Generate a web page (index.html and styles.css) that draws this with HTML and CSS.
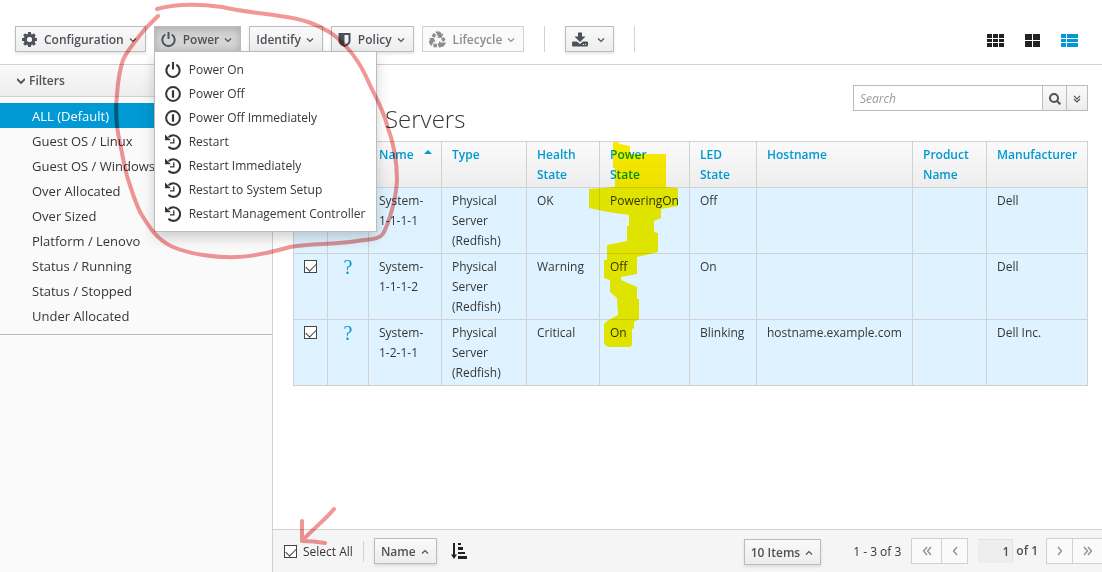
FILE: index.html
```
<!DOCTYPE html>
<html lang="en">
<head>
<meta charset="utf-8">
<title>Servers</title>
<link rel="stylesheet" href="styles.css">
</head>
<body>
<svg class="defs" aria-hidden="true">
  <symbol id="down" viewBox="0 0 8 8"><path d="M1 2.500l3 3 3-3" fill="none" stroke="currentColor" stroke-width="1.200"/></symbol>
  <symbol id="up" viewBox="0 0 8 8"><path d="M1 5.500l3-3 3 3" fill="none" stroke="currentColor" stroke-width="1.200"/></symbol>
  <symbol id="power" viewBox="0 0 16 16"><path d="M4.600 2.700a6.600 6.600 0 1 0 6.800 0M8 0v7.500" fill="none" stroke="currentColor" stroke-width="2.100"/></symbol>
  <symbol id="off" viewBox="0 0 16 16"><circle cx="8" cy="8" r="6.900" fill="none" stroke="currentColor" stroke-width="2"/><path d="M8 4.300v7.400" stroke="currentColor" stroke-width="2.200"/></symbol>
  <symbol id="history" viewBox="0 0 16 16"><path d="M3.600 3.200A6.800 6.800 0 1 1 3.400 12.800" fill="none" stroke="currentColor" stroke-width="2.100"/><path d="M0 .5v5.700h5.900z" fill="currentColor"/><path d="M8.800 4.500v4.300H5" fill="none" stroke="currentColor" stroke-width="1.300"/></symbol>
</svg>
<div class="page">
  <header class="toolbar">
    <button class="btn"><svg class="icon" viewBox="0 128 1536 1536"><path fill="currentColor" d="M1024 896q0 106-75 181t-181 75-181-75-75-181 75-181 181-75 181 75 75 181zm512-109v222q0 12-8 23t-20 13l-185 28q-19 54-39 91 35 50 107 138 10 12 10 25t-9 23q-27 37-99 108t-94 71q-12 0-26-9l-138-108q-44 23-91 38-16 136-29 186-7 28-36 28h-222q-14 0-24.500-8.500t-11.500-21.500l-28-184q-49-16-90-37l-141 107q-10 9-25 9-14 0-25-11-126-114-165-168-7-10-7-23 0-12 8-23 15-21 51-66.500t54-70.500q-27-50-41-99l-183-27q-13-2-21-12.500t-8-23.500v-222q0-12 8-23t19-13l186-28q14-46 39-92-40-57-107-138-10-12-10-24 0-10 9-23 26-36 98.500-107.500t94.500-71.500q13 0 26 10l138 107q44-23 91-38 16-136 29-186 7-28 36-28h222q14 0 24.500 8.500t11.500 21.500l28 184q49 16 90 37l142-107q9-9 24-9 13 0 25 10 129 119 165 170 7 8 7 22 0 12-8 23-15 21-51 66.500t-54 70.500q26 50 41 98l183 28q13 2 21 12.500t8 23.500z" fill-rule="evenodd"/><circle cx="768" cy="896" r="256" fill="#f4f4f4"/></svg><span class="label">Configuration</span><svg class="caret"><use href="#down"/></svg></button>
    <div class="dropdown">
      <button class="btn open" aria-expanded="true"><svg class="icon"><use href="#power"/></svg><span class="label">Power</span><svg class="caret"><use href="#down"/></svg></button>
      <div class="menu" role="menu">
        <button class="item" role="menuitem"><svg><use href="#power"/></svg>Power On</button>
        <button class="item" role="menuitem"><svg><use href="#off"/></svg>Power Off</button>
        <button class="item" role="menuitem"><svg><use href="#off"/></svg>Power Off Immediately</button>
        <button class="item" role="menuitem"><svg><use href="#history"/></svg>Restart</button>
        <button class="item" role="menuitem"><svg><use href="#history"/></svg>Restart Immediately</button>
        <button class="item" role="menuitem"><svg><use href="#history"/></svg>Restart to System Setup</button>
        <button class="item" role="menuitem"><svg><use href="#history"/></svg>Restart Management Controller</button>
      </div>
    </div>
    <button class="btn">Identify<svg class="caret"><use href="#down"/></svg></button>
    <button class="btn"><svg class="icon small" viewBox="0 0 12 14"><path fill="currentColor" fill-rule="evenodd" d="M0 0h12v8c0 3-3 5-6 6-3-1-6-3-6-6zM6 2v10c2-.8 4-2.200 4-4V2z"/></svg><span class="label">Policy</span><svg class="caret"><use href="#down"/></svg></button>
    <button class="btn" disabled><svg class="icon wide" viewBox="0 0 16 16"><g id="leg"><path d="M3.900 5.600L5.500 2.700" fill="none" stroke="currentColor" stroke-width="3.200"/><path fill="currentColor" d="M6 .5h3.800q.8 0 1.300.8l1.100 1.800 1.500-.8-2 4.200-4.600-.3 1.500-.9z"/></g><use href="#leg" transform="rotate(120 8 8.600)"/><use href="#leg" transform="rotate(240 8 8.600)"/></svg><span class="label">Lifecycle</span><svg class="caret"><use href="#down"/></svg></button>
    <span class="divider"></span>
    <button class="btn download" aria-label="Download"><svg class="icon" viewBox="0 0 16 14"><path fill="currentColor" d="M6 0h4v4h3.500L8 9.500 2.500 4H6z"/><path fill="currentColor" fill-rule="evenodd" d="M1 9h4l3 2.500L11 9h4q1 0 1 1v3q0 1-1 1H1q-1 0-1-1v-3q0-1 1-1zM11 11.500v1h1v-1zM13 11.500v1h1v-1z"/></svg><svg class="caret"><use href="#down"/></svg></button>
    <span class="divider"></span>
    <nav class="views">
      <button aria-label="Grid view"><svg viewBox="0 0 17 13"><path fill="currentColor" d="M0 0h5v4H0zM6 0h5v4H6zM12 0h5v4h-5zM0 5h5v3H0zM6 5h5v3H6zM12 5h5v3h-5zM0 9h5v4H0zM6 9h5v4H6zM12 9h5v4h-5z"/></svg></button>
      <button aria-label="Tile view"><svg viewBox="0 0 17 13"><path fill="currentColor" d="M1 0h7v6H1zM9 0h7v6H9zM1 7h7v6H1zM9 7h7v6H9z"/></svg></button>
      <button class="current" aria-label="List view"><svg viewBox="0 0 17 13"><path fill="currentColor" d="M0 0h5v4H0zM6 0h11v4H6zM0 5h5v3H0zM6 5h11v3H6zM0 9h5v4H0zM6 9h11v4H6z"/></svg></button>
    </nav>
  </header>
  <div class="body">
    <aside class="sidebar">
      <button class="filters"><svg viewBox="0 0 8 8"><path d="M0 2l4 4 4-4" fill="none" stroke="currentColor" stroke-width="1.800"/></svg>Filters</button>
      <nav class="list">
        <a class="active" href="#">ALL (Default)</a>
        <a href="#">Guest OS / Linux</a>
        <a href="#">Guest OS / Windows</a>
        <a href="#">Over Allocated</a>
        <a href="#">Over Sized</a>
        <a href="#">Platform / Lenovo</a>
        <a href="#">Status / Running</a>
        <a href="#">Status / Stopped</a>
        <a href="#">Under Allocated</a>
      </nav>
    </aside>
    <main class="main">
      <div class="content">
        <form class="search">
          <input type="text" placeholder="Search" aria-label="Search">
          <button type="button" aria-label="Run search"><svg viewBox="0 0 12 12"><circle cx="5" cy="5" r="4" fill="none" stroke="currentColor" stroke-width="2"/><path d="M8 8l3.300 3.300" stroke="currentColor" stroke-width="2"/></svg></button>
          <button type="button" class="more" aria-label="Advanced search"><svg viewBox="0 0 8 8"><path d="M1 .8l3 3 3-3M1 4l3 3 3-3" fill="none" stroke="currentColor" stroke-width="1.200"/></svg></button>
        </form>
        <h1>Servers</h1>
        <table>
          <colgroup><col class="c-check"><col class="c-icon"><col class="c-name"><col class="c-type"><col class="c-name"><col class="c-power"><col class="c-led"><col class="c-host"><col class="c-product"><col class="c-maker"></colgroup>
          <thead><tr><th></th><th></th><th class="sort-col"><a href="#">Name</a><span class="sorted"></span></th><th><a href="#">Type</a></th><th><a href="#">Health State</a></th><th><a href="#">Power State</a></th><th><a href="#">LED State</a></th><th><a href="#">Hostname</a></th><th><a href="#">Product Name</a></th><th><a href="#">Manufacturer</a></th></tr></thead>
          <tbody>
            <tr><td class="mid"><input type="checkbox" checked aria-label="System-1-1-1-1"></td><td class="mid unknown"></td><td>System-1-1-1-1</td><td>Physical Server (Redfish)</td><td>OK</td><td>PoweringOn</td><td>Off</td><td></td><td></td><td>Dell</td></tr>
            <tr><td class="mid"><input type="checkbox" checked aria-label="System-1-1-1-2"></td><td class="mid unknown">?</td><td>System-1-1-1-2</td><td>Physical Server (Redfish)</td><td>Warning</td><td>Off</td><td>On</td><td></td><td></td><td>Dell</td></tr>
            <tr><td class="mid"><input type="checkbox" checked aria-label="System-1-2-1-1"></td><td class="mid unknown">?</td><td>System-1-2-1-1</td><td>Physical Server (Redfish)</td><td>Critical</td><td>On</td><td>Blinking</td><td>hostname.example.com</td><td></td><td>Dell Inc.</td></tr>
          </tbody>
        </table>
      </div>
      <footer class="footer">
        <label class="all"><input type="checkbox" checked>Select All</label>
        <button class="btn">Name<svg class="caret"><use href="#up"/></svg></button>
        <button class="sort" aria-label="Sort ascending"><svg viewBox="0 0 16 16"><path d="M3 0v12" stroke="currentColor" stroke-width="2"/><path fill="currentColor" d="M0 11.500h6L3 16zM7 0h3v2H7zM7 4h5v3H7zM7 9h7v2H7zM7 13h9v3H7z"/></svg></button>
        <button class="btn items">10 Items<svg class="caret"><use href="#up"/></svg></button>
        <span class="range">1 - 3 of 3</span>
        <div class="pager">
          <button aria-label="First page"><svg viewBox="0 0 10 10"><path d="M5 1L1.500 5 5 9M9 1L5.500 5 9 9"/></svg></button>
          <button aria-label="Previous page"><svg viewBox="0 0 10 10"><path d="M7 1L3.500 5 7 9"/></svg></button>
        </div>
        <label class="pageno"><input type="text" value="1" aria-label="Page">of 1</label>
        <div class="pager last">
          <button aria-label="Next page"><svg viewBox="0 0 10 10"><path d="M3 1l3.500 4L3 9"/></svg></button>
          <button aria-label="Last page"><svg viewBox="0 0 10 10"><path d="M1 1l3.500 4L1 9M5 1l3.500 4L5 9"/></svg></button>
        </div>
      </footer>
    </main>
  </div>
  <svg class="marks" viewBox="0 0 1102 572" width="1102" height="572" aria-hidden="true">
    <path class="marker" d="M613 142h5l2 2 10 2v8h36v33l12 1v18l-17 3v9l-7 3v11l4 1v19l-21 5v17l-16 3v3l16 7v12h2v20l-5 3v6l-2 1v16l-2 2h-22l-4-3v-20l3-3 11-6-1-17-7-6v-12l-6-2v-18h3v-15l20-4v-15h2v-11l-21-3-19-4v-19l26-2v-19h-2z"/>
    <path class="pen" d="M157 9C175 4 200 4 222 7C245 12 260 13 280 16C304 19 316 24 331 33C350 47 361 64 369 83C376 98 383 109 387 125C393 141 397 161 397 180C396 200 389 222 384 232C380 241 366 239 357 241C330 245 315 243 290 247C275 251 260 256 237 257C215 258 190 254 173 247C157 240 149 227 140 212C134 199 131 189 127 176C124 164 122 153 120 143C117 130 115 112 117 95C118 78 120 69 123 60C127 50 138 38 145 29L158 16"/>
    <path class="pen" d="M334 509C326 519 312 530 302 541M302 521V541Q313 541 325 543"/>
  </svg>
</div>
</body>
</html>
```
FILE: styles.css
```
* { box-sizing: border-box; }
body {
  margin: 0;
  font: 12px/20px "Open Sans", "Liberation Sans", sans-serif;
  color: #363636;
  background: #fff;
}
button, input { font: inherit; color: inherit; margin: 0; }
button { cursor: pointer; }
a { text-decoration: none; color: inherit; }
.defs { position: absolute; width: 0; height: 0; }
.page { position: relative; display: flex; flex-direction: column; min-height: 100vh; overflow: hidden; }

.toolbar {
  display: flex;
  align-items: center;
  gap: 8px;
  padding: 26px 24px 12px 15px;
  border-bottom: 1px solid #d1d1d1;
}
.btn {
  display: flex;
  align-items: center;
  height: 26px;
  padding: 1px 8px 0 6px;
  border: 1px solid #bbb;
  background: linear-gradient(#fafafa, #ededed);
  box-shadow: 0 2px 3px rgba(3, 3, 3, .1);
  font-weight: 600;
  color: #4d5258;
  white-space: nowrap;
}
.btn:disabled { background: #fafafa; color: #8b8d8f; border-color: #d1d1d1; box-shadow: none; }
.btn.open { background: #d4d4d4; box-shadow: inset 0 2px 8px rgba(3, 3, 3, .2); }
.icon { width: 15px; height: 15px; }
.icon.small { width: 13px; height: 14px; }
.icon.wide { width: 17px; height: 17px; }
.label { margin-left: 7px; }
.caret { width: 8px; height: 8px; margin-left: 5px; }
.divider { width: 1px; height: 26px; margin: 0 12px; background: #d1d1d1; }
.download .icon { width: 16px; }
.download .caret { margin-left: 9px; }
.views { display: flex; gap: 20px; margin-left: auto; }
.views button { display: flex; padding: 2px 0 0; border: 0; background: none; color: #222; }
.views svg { width: 17px; height: 13px; }
.views .current { color: #0099d3; }

.dropdown { position: relative; }
.menu {
  position: absolute;
  z-index: 5;
  top: 100%;
  left: 0;
  margin-top: -1px;
  padding: 6px 0 5px;
  border: 1px solid #bbb;
  background: #fff;
  box-shadow: 0 6px 12px rgba(0, 0, 0, .18);
}
.item {
  display: flex;
  align-items: center;
  gap: 8px;
  width: 100%;
  height: 24px;
  padding: 0 11px 0 10px;
  border: 0;
  background: none;
  white-space: nowrap;
}
.item svg { width: 16px; height: 16px; }

.body { display: flex; flex: 1; }
.sidebar { flex: none; width: 273px; border-right: 1px solid #d1d1d1; background: #fafafa; }
.filters {
  display: flex;
  align-items: center;
  gap: 4px;
  width: 100%;
  height: 32px;
  padding: 0 17px;
  border: 0;
  border-bottom: 1px solid #d1d1d1;
  background: linear-gradient(#fafafa, #ededed);
  font-weight: 600;
  color: #4d5258;
}
.filters svg { width: 8px; height: 8px; }
.list { padding: 6px 0; border-bottom: 1px solid #bbb; font-size: 13px; }
.list a { display: block; padding: 2px 32px 0; line-height: 23px; }
.list .active { background: #0099d3; color: #fff; }

.main { flex: 1; min-width: 0; display: flex; flex-direction: column; }
.content { flex: 1; padding: 20px 14px 20px 20px; }
.search { display: flex; width: 235px; height: 26px; margin-left: auto; border: 1px solid #bbb; }
.search input { flex: 1; min-width: 0; padding: 2px 6px 0; border: 0; }
.search input::placeholder { font-style: italic; color: #999; }
.search button {
  display: flex;
  align-items: center;
  justify-content: center;
  width: 24px;
  padding: 2px 0 0;
  border: 0;
  border-left: 1px solid #bbb;
  background: linear-gradient(#fafafa, #ededed);
  color: #4d5258;
}
.search svg { width: 12px; height: 12px; }
.search .more { width: 21px; }
.search .more svg { width: 8px; height: 8px; }
h1 { margin: 0 0 14px; padding-left: 92px; font-size: 24px; line-height: 16px; font-weight: 300; }

table { width: 100%; border-collapse: collapse; table-layout: fixed; }
.c-check { width: 34px; }
.c-icon { width: 41px; }
.c-name { width: 73px; }
.c-type { width: 85px; }
.c-power { width: 90px; }
.c-led { width: 67px; }
.c-host { width: 156px; }
.c-product { width: 74px; }
.c-maker { width: 101px; }
th, td { padding: 3px 10px 2px; border: 1px solid #d1d1d1; text-align: left; vertical-align: top; }
thead { background: linear-gradient(#fafafa, #ededed); }
th { font-weight: 600; color: #0099d3; }
.sort-col { padding-right: 0; }
tbody { background: #def3ff; }
.mid { padding-left: 0; padding-right: 0; text-align: center; }
.unknown { font: 20px/20px "Liberation Serif", serif; color: #0099d3; }
.sorted {
  display: inline-block;
  margin-left: 10px;
  border: 4px solid transparent;
  border-top: 0;
  border-bottom-color: #0099d3;
  vertical-align: 5px;
}
input[type="checkbox"] {
  appearance: none;
  display: inline-block;
  width: 13px;
  height: 13px;
  border: 1px solid #444;
  background: #fff;
  vertical-align: -2px;
}
input[type="checkbox"]:checked::before {
  content: "";
  display: block;
  width: 9px;
  height: 5px;
  margin: 2px 1px;
  border: solid #444;
  border-width: 0 0 1px 1px;
  transform: rotate(-45deg);
}

.footer {
  display: flex;
  align-items: center;
  height: 43px;
  padding-left: 11px;
  border-top: 1px solid #d1d1d1;
  background: #f5f5f5;
  white-space: nowrap;
}
.footer .btn { padding-right: 7px; }
.all { display: flex; align-items: center; gap: 6px; padding: 1px 10px 0 0; margin-right: 10px; border-right: 1px solid #d1d1d1; }
.sort { display: flex; margin-left: 14px; padding: 0; border: 0; background: none; color: #222; }
.sort svg { width: 16px; height: 16px; }
.footer .items { margin: 2px 0 0 auto; }
.range { margin: 0 10px 0 32px; padding-top: 1px; }
.pager { display: flex; border: 1px solid #d1d1d1; }
.pager button {
  display: flex;
  align-items: center;
  justify-content: center;
  width: 26px;
  height: 24px;
  padding: 0;
  border: 0;
  background: #fafafa;
  color: #8b8d8f;
}
.pager button:first-child { width: 29px; }
.pager button + button { border-left: 1px solid #d1d1d1; }
.pager svg { width: 10px; height: 10px; fill: none; stroke: currentColor; stroke-width: 1.300px; }
.pager.last { border-right: 0; }
.pager.last button:first-child { width: 25px; }
.pager.last button + button { width: 30px; }
.pageno { display: flex; align-items: center; gap: 3px; margin: 0 8px 0 10px; font-weight: 600; color: #4d5258; }
.pageno input { width: 35px; height: 24px; padding: 0 3px; border: 1px solid #e0e0e0; border-width: 1px 1px 0 0; background: #eee; text-align: right; }

/* Hand-drawn annotations over the screen */
.marks { position: absolute; top: 0; left: 0; z-index: 10; pointer-events: none; mix-blend-mode: multiply; }
.marker { fill: #fff000; }
.pen { fill: none; stroke: #f29696; stroke-width: 4px; stroke-linecap: round; stroke-linejoin: round; }
```
